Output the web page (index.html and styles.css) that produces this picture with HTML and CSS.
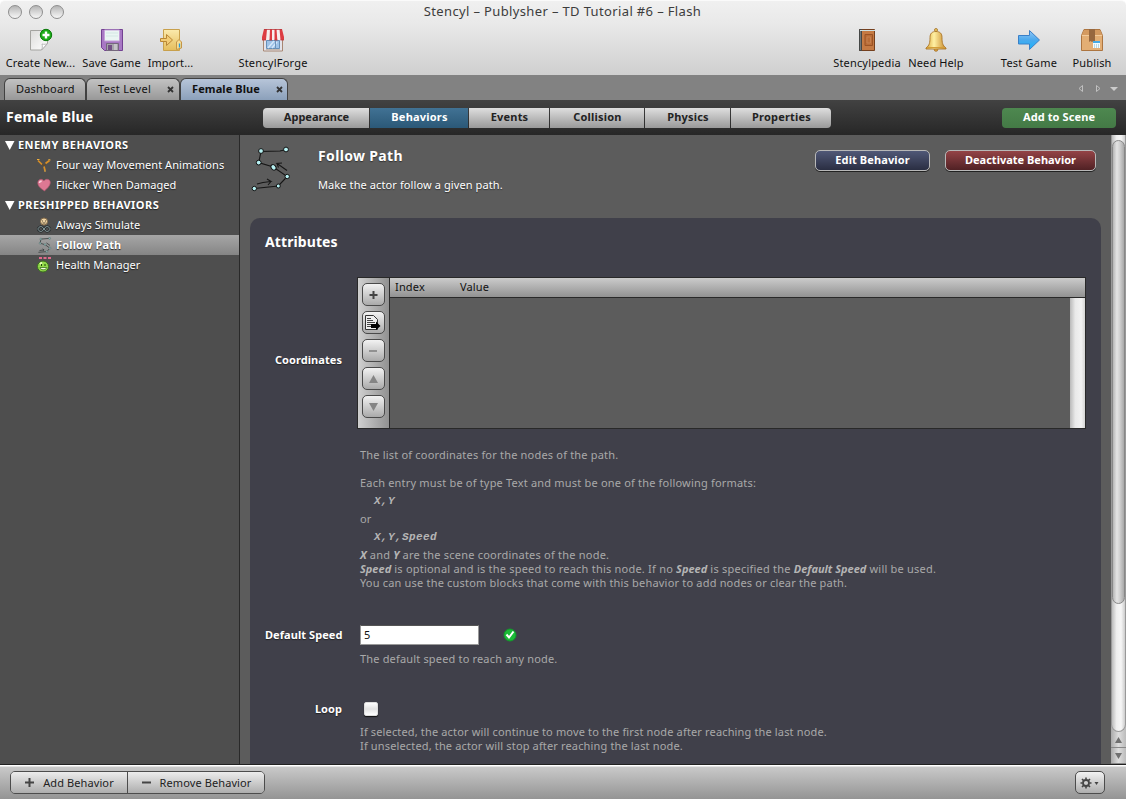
FILE: index.html
```html
<!DOCTYPE html>
<html lang="en">
<head>
<meta charset="utf-8">
<title>Stencyl - Publysher - TD Tutorial #6 - Flash</title>
<link rel="stylesheet" href="styles.css">
</head>
<body>
<div class="window">
  <header class="titlebar">
    <div class="title-row">
      <div class="lights"><i></i><i></i><i></i></div>
      <h1 class="title">Stencyl – Publysher – TD Tutorial #6 – Flash</h1>
    </div>
    <nav class="toolbar">
      <div class="tool w-create"><svg width="24" height="24" viewBox="0 0 24 24"><defs><linearGradient id="pg" x1="0" y1="0" x2="1" y2="1"><stop offset="0" stop-color="#dcdcda"/><stop offset="1" stop-color="#fff"/></linearGradient></defs><path d="M1.500 2.500h17v13l-6 6.500h-11z" fill="url(#pg)" stroke="#a4a4a0"/><path d="M12.500 22c1-2 1-4 .5-6 2 .6 4 .3 5.500-.5z" fill="#fff" stroke="#aaa" stroke-width=".8"/><circle cx="17" cy="7" r="5.700" fill="#1cab18" stroke="#087808"/><path d="M17 3.500v7M13.500 7h7" stroke="#fff" stroke-width="2.400"/></svg><span>Create New...</span></div>
      <div class="tool w-save"><svg width="24" height="24" viewBox="0 0 24 24"><path d="M1.500 1.500h21v21h-18l-3-3z" fill="#a878c4" stroke="#734192"/><path d="M4.500 2h15v11h-15z" fill="#eaf5f3" stroke="#c4a1d8"/><path d="M6 5h12M6 8h12" stroke="#d3e7e4"/><path d="M6.500 15.500h12v7h-12z" fill="#a6a3ab" stroke="#75677d"/><path d="M8 17h4v5H8z" fill="#735085"/><path d="M14 16h3v6h-3z" fill="#c5c3c8"/></svg><span>Save Game</span></div>
      <div class="tool w-import"><svg width="24" height="24" viewBox="0 0 24 24"><defs><linearGradient id="im" x1="0" y1="0" x2="0" y2="1"><stop offset="0" stop-color="#fbeaad"/><stop offset="1" stop-color="#e5bd5b"/></linearGradient></defs><path d="M4.500 1.500h16v21h-16z" fill="url(#im)" stroke="#c8a04c"/><path d="M1.500 10.500h6v-4l6 5.500-6 5.500v-4h-6z" fill="#f2cc75" stroke="#b98635"/><path d="M17.500 21.500V14l2.500-2.500 2.500 2.500v6z" fill="#f7dc91" stroke="#c59545"/><path d="M20.500 15.500v4" stroke="#269bdc" stroke-width="1.300"/></svg><span>Import...</span></div>
      <div class="tool w-forge"><svg width="24" height="24" viewBox="0 0 24 24"><path d="M2.500 10h19v13h-19z" fill="#e3e3ea" stroke="#a88672"/><path d="M5.500 12.500h13v8h-13z" fill="#9ec3e8" stroke="#668fb7"/><path d="M7 20l6-7M11 20l5-6" stroke="#d4e7fa" stroke-width="1.500"/><path d="M14.500 13v8" stroke="#6d93b8"/><path d="M5 21.500h14" stroke="#c4b9b0"/><path d="M3 1h18l2 8v3H1V9z" fill="#f6eeee"/><path d="M3 1h3L5 12H1V9zM9 1h2v11H8.500zM13.500 1h2l.8 11h-2.800zM18.500 1H21l2 8v3h-3.500z" fill="#dc3c42"/><path d="M3 1.500h18M1 12h4M8.500 12H11M13.500 12h3M19.500 12H23" stroke="#b9383c" stroke-width=".8"/></svg><span>StencylForge</span></div>
      <div class="spacer"></div>
      <div class="tool w-pedia"><svg width="24" height="24" viewBox="0 0 24 24"><path d="M4.500 1.500h15v21h-15z" fill="#c57a43" stroke="#75401e"/><path d="M4.500 1.500h2v21h-2z" fill="#70777a" stroke="#454746"/><path d="M5 2.500h15" stroke="#cfe0e1"/><path d="M10 6.500h7.500v11H10z" fill="#b96c36" stroke="#9b5325"/><path d="M12 9h3.500v6H12z" fill="none" stroke="#c58050"/></svg><span>Stencylpedia</span></div>
      <div class="tool w-help"><svg width="24" height="24" viewBox="0 0 24 24"><defs><linearGradient id="bell"><stop offset="0" stop-color="#d8a53a"/><stop offset=".4" stop-color="#fff0a3"/><stop offset="1" stop-color="#c78728"/></linearGradient></defs><circle cx="12" cy="2" r="1.500" fill="#efcc65" stroke="#9e6c24" stroke-width=".8"/><circle cx="12" cy="21.500" r="1.800" fill="#dca63e" stroke="#a16b22" stroke-width=".8"/><path d="M12 3.500c-4 0-6 2-6 6 0 5-.5 8-4 10.500v1h20v-1c-3.500-2.500-4-5.500-4-10.500 0-4-2-6-6-6z" fill="url(#bell)" stroke="#ab7629" stroke-width=".9"/><path d="M3 19.500h18" stroke="#d49e38"/></svg><span>Need Help</span></div>
      <div class="tool w-test"><svg width="24" height="24" viewBox="0 0 24 24"><defs><linearGradient id="ar" x1="0" y1="0" x2="0" y2="1"><stop offset="0" stop-color="#95c6f3"/><stop offset=".5" stop-color="#4aa9ee"/><stop offset="1" stop-color="#18b4fa"/></linearGradient></defs><path d="M1.500 7.500h11v-5L22.500 12l-10 9.500v-5.500h-11z" fill="url(#ar)" stroke="#3a80c8"/></svg><span>Test Game</span></div>
      <div class="tool w-publish"><svg width="24" height="24" viewBox="0 0 24 24"><path d="M4 1.500h16l2.500 6v15h-21v-15z" fill="#e3ae74" stroke="#ad7540"/><path d="M4 2h16l2 5H2z" fill="#d49a60"/><path d="M2 7.500h20" stroke="#f2ca9a"/><path d="M9 1h6v13l-1.500-1-1.500 1-1.500-1L9 14z" fill="#97683f"/><path d="M13 13h7v7h-7z" fill="#f2fbff"/><path d="M13 13h7v2h-7z" fill="#45a9e4"/><path d="M14 17h5M14 19h5" stroke="#7eb5c9" stroke-dasharray="1 1"/></svg><span>Publish</span></div>
    </nav>
  </header>

  <div class="tabs">
    <div class="tab t1"><span>Dashboard</span></div>
    <div class="tab t2"><span>Test Level</span><svg class="x" width="7" height="7" viewBox="0 0 7 7"><path d="M1 1l5 5M6 1L1 6"/></svg></div>
    <div class="tab t3 active"><span>Female Blue</span><svg class="x" width="7" height="7" viewBox="0 0 7 7"><path d="M1 1l5 5M6 1L1 6"/></svg></div>
    <svg class="tabnav" width="44" height="10" viewBox="0 0 44 10"><path d="M5.500 1.500v6L2 4.500zM19.500 1.500v6l3.500-3z" fill="none" stroke="#c0c0c0"/><path d="M33 3h8l-4 4z" fill="#ccc"/></svg>
  </div>

  <div class="actorbar">
    <h2 class="actor">Female Blue</h2>
    <div class="segments">
      <button class="g1">Appearance</button><button class="g2 on">Behaviors</button><button class="g3">Events</button><button class="g4">Collision</button><button class="g5">Physics</button><button class="g6">Properties</button>
    </div>
    <button class="addscene">Add to Scene</button>
  </div>

  <div class="body">
    <aside class="sidebar">
      <div class="group"><svg width="10" height="9" viewBox="0 0 10 9"><path d="M0 0h9.500L4.700 9z"/></svg><span>ENEMY BEHAVIORS</span></div>
      <div class="item"><svg width="16" height="16" viewBox="0 0 16 16"><path d="M2 3.500l4 4M13.500 3.500l-4 3M8 9.500l1 4" stroke="#d98f25" stroke-width="1.700" fill="none"/><path d="M1 2.500h2.500M12.500 2.500l2 .5M8 14h2" stroke="#efaf3f" fill="none"/><path d="M6 7.500l2 1 2-1.500" stroke="#6a4a20" fill="none"/></svg><span>Four way Movement Animations</span></div>
      <div class="item"><svg width="16" height="16" viewBox="0 0 16 16"><path d="M8.500 14C5 11.500 2 9.500 1.800 6c0-4 4.500-4.800 6-2 2-2.800 6.500-2 6.500 1.500 0 3.500-3.500 6-5.800 8.500z" fill="#dd7893" stroke="#b0566f" stroke-width=".7"/><path d="M3.500 6c0-1.500 1.200-2 2.200-1.500" stroke="#fbd3dd" stroke-width="1.600" fill="none"/></svg><span>Flicker When Damaged</span></div>
      <div class="group"><svg width="10" height="9" viewBox="0 0 10 9"><path d="M0 0h9.500L4.700 9z"/></svg><span>PRESHIPPED BEHAVIORS</span></div>
      <div class="item"><svg width="16" height="16" viewBox="0 0 16 16"><circle cx="8" cy="4.500" r="3.500" fill="#edd2a3" stroke="#836a48"/><path d="M6 4h1M9 4h1M6.500 6h3" stroke="#594a36"/><path d="M8 12c-3-5-6-1-6 0s3 5 6 0c3-5 6-1 6 0s-3 5-6 0z" fill="none" stroke="#252b2d" stroke-width="2.400"/><path d="M8 12c-3-5-6-1-6 0s3 5 6 0c3-5 6-1 6 0s-3 5-6 0z" fill="none" stroke="#93a7a9" stroke-width=".9"/></svg><span>Always Simulate</span></div>
      <div class="item selected"><svg width="16" height="16" viewBox="0 0 42 46"><g fill="none" stroke="#3d4444" stroke-width="2.500"><path d="M37 4L12 6l-2 12 14 4 14 10-9 10L5 44M8 39l13-2-4-3m4 3l-3 3M38 24l-10-7"/></g><g fill="#8ab0ae" stroke="#4c5e5e"><circle cx="37" cy="4" r="3"/><circle cx="12" cy="6" r="3"/><circle cx="10" cy="18" r="3"/><circle cx="24" cy="22" r="3"/><circle cx="38" cy="32" r="3"/><circle cx="29" cy="42" r="3"/></g></svg><span>Follow Path</span></div>
      <div class="item"><svg width="16" height="16" viewBox="0 0 16 16"><circle cx="7" cy="9.500" r="5.500" fill="#92d84a" stroke="#386d1e"/><path d="M4 7l2-1.500" stroke="#e6ffb5" stroke-width="2"/><path d="M5.500 7v2M9 7v2" stroke="#20460f"/><path d="M4 10.500h6.500c0 3-6.500 3-6.500 0z" fill="#f3ffe1" stroke="#386e1c" stroke-width=".8"/><path d="M3 1h3M7.500 1h3M12 1h3" stroke="#e06a8b" stroke-width="2"/></svg><span>Health Manager</span></div>
    </aside>

    <main class="main">
      <section class="intro">
        <svg class="pathicon" width="42" height="46" viewBox="0 0 42 46"><g fill="none" stroke="#161616" stroke-width="1.100"><path d="M36 3.500L30 5 11 5.500 8.700 16.600l14.600 4.400 13.900 9.500-8.900 9.500L4.300 42.500M7 38l6-1.500 8-1-4-2.500m4 2.500l-3 3.500M37 24.500L27 17.500l5-.5M27 17.500l1.500 4"/></g><g fill="#b7f2f4" stroke="#111"><circle cx="36" cy="3.500" r="2.400"/><circle cx="11" cy="5" r="2.400"/><circle cx="8.700" cy="16.600" r="2.400"/><ellipse cx="23.500" cy="21.300" rx="2.300" ry="3" transform="rotate(-40 23.500 21.300)"/><circle cx="37.200" cy="30.500" r="2.200"/><circle cx="28.300" cy="40" r="2"/><circle cx="4.300" cy="42.500" r="2.200"/></g></svg>
        <div class="intro-text"><h2>Follow Path</h2><p>Make the actor follow a given path.</p></div>
        <button class="pill edit">Edit Behavior</button>
        <button class="pill deact">Deactivate Behavior</button>
      </section>

      <section class="panel">
        <h3>Attributes</h3>
        <div class="field f1">
          <label>Coordinates</label>
          <div class="list">
            <div class="listbar">
              <button><svg width="21" height="21" viewBox="0 0 21 21"><path d="M10.500 7v8M6.500 11h8" stroke="#444" stroke-width="2"/></svg></button>
              <button><svg width="21" height="21" viewBox="0 0 21 21"><path d="M2.500 3.500h8l4 4v10h-12z" fill="#eee" stroke="#333"/><path d="M4 6.500h4M4 8.500h6M4 10.500h8M4 12.500h4M4 14.500h4" stroke="#444"/><path d="M8 12h5V9.500l4.500 4.500-4.500 4v-2H8z" fill="#000"/></svg></button>
              <button><svg width="21" height="21" viewBox="0 0 21 21"><path d="M6 11h8" stroke="#919191" stroke-width="2"/></svg></button>
              <button><svg width="21" height="21" viewBox="0 0 21 21"><path d="M6 15h9l-4.500-8z" fill="#858585"/></svg></button>
              <button><svg width="21" height="21" viewBox="0 0 21 21"><path d="M6 7h9l-4.500 8z" fill="#858585"/></svg></button>
            </div>
            <div class="table">
              <div class="thead"><span class="c-index">Index</span><span>Value</span></div>
              <div class="tbody"><div class="track"></div></div>
            </div>
          </div>
        </div>
        <div class="help h1">
          <p>The list of coordinates for the nodes of the path.</p>
          <p class="gap">Each entry must be of type Text and must be one of the following formats:</p>
          <p class="code">X,Y</p>
          <p>or</p>
          <p class="code">X,Y,Speed</p>
          <p class="mixed"><b>X</b> and <b>Y</b> are the scene coordinates of the node.</p>
          <p class="mixed"><b>Speed</b> is optional and is the speed to reach this node. If no <b>Speed</b> is specified the <b>Default Speed</b> will be used.</p>
          <p>You can use the custom blocks that come with this behavior to add nodes or clear the path.</p>
        </div>
        <div class="field f2">
          <label>Default Speed</label>
          <div class="input">5</div>
          <svg class="ok" width="14" height="14" viewBox="0 0 14 14"><circle cx="7" cy="7" r="6" fill="#1bbb37" stroke="#129a2b"/><path d="M3.500 6.500L6 9.500 10.500 3.500" fill="none" stroke="#fff" stroke-width="2"/></svg>
        </div>
        <div class="help h2"><p>The default speed to reach any node.</p></div>
        <div class="field f3"><label>Loop</label><div class="check"></div></div>
        <div class="help h3"><p>If selected, the actor will continue to move to the first node after reaching the last node.</p><p>If unselected, the actor will stop after reaching the last node.</p></div>
      </section>
    </main>

    <div class="scroll">
      <div class="rail"><div class="thumb"></div></div>
      <div class="arrow"><svg width="7" height="6" viewBox="0 0 7 6"><path d="M0 6h7L3.500 0z"/></svg></div>
      <div class="arrow"><svg width="7" height="6" viewBox="0 0 7 6"><path d="M0 0h7L3.500 6z"/></svg></div>
    </div>
  </div>

  <footer class="footer">
    <div class="duo">
      <button class="b-add"><svg width="9" height="9" viewBox="0 0 9 9"><path d="M4.500 0v9M0 4.500h9"/></svg><span>Add Behavior</span></button>
      <button class="b-rem"><svg width="9" height="9" viewBox="0 0 9 9"><path d="M0 4.500h9"/></svg><span>Remove Behavior</span></button>
    </div>
    <button class="gear"><svg width="20" height="12" viewBox="0 0 20 12"><circle cx="6" cy="6" r="3" fill="none" stroke="#444" stroke-width="1.800"/><path d="M6 .5v2M6 9.500v2M.5 6h2M9.500 6h2M2 2l1.500 1.500M8.500 8.500L10 10M10 2L8.500 3.500M3.500 8.500L2 10" stroke="#444" stroke-width="1.600"/><path d="M14.500 5h4l-2 3z" fill="#444"/></svg></button>
  </footer>
</div>
</body>
</html>
```
FILE: styles.css
```css
* { box-sizing: border-box; }
body { margin: 0; background: #fff; font: 11px/14px "Noto Sans", "Open Sans", sans-serif; color: #111; letter-spacing: 0.1px; }
h1, h2, h3, p { margin: 0; }
svg { display: block; flex: none; }
button { font: inherit; letter-spacing: inherit; border: 0; padding: 0; color: inherit; display: flex; align-items: center; justify-content: center; white-space: nowrap; }
span, p, label { white-space: nowrap; }
.window { width: 1126px; height: 799px; display: flex; flex-direction: column; overflow: hidden; }

.titlebar { height: 75px; flex: none; background: linear-gradient(#f0f0f0, #e9e9e9 30%, #cfcfcf); border-radius: 5px 5px 0 0; border-top: 1px solid #fafafa; }
.title-row { height: 22px; display: grid; grid-template-columns: 70px 1fr 71px; align-items: center; }
.lights { display: flex; gap: 7px; padding-left: 8px; margin-top: -1px; }
.lights i { width: 14px; height: 14px; border-radius: 50%; border: 1px solid #8e8e8e; background: linear-gradient(#b4b4b4, #dedede 60%, #f6f6f6); }
.title { font-size: 13px; font-weight: 400; line-height: 18px; text-align: center; color: #3c3c3c; letter-spacing: 0.360px; margin-top: -2px; }
.toolbar { display: flex; padding: 5px 10px 0 0; }
.tool { display: flex; flex-direction: column; align-items: center; gap: 4px; }
.w-create { width: 80px; padding-left: 1px; }
.w-save { width: 62px; padding-left: 1px; }
.w-import { width: 56px; padding-left: 1px; }
.w-forge { width: 150px; letter-spacing: 0.220px; }
.spacer { flex: 1; }
.w-pedia { width: 78px; letter-spacing: 0.180px; }
.w-help { width: 60px; margin-right: 24px; }
.w-test { width: 78px; letter-spacing: 0.220px; }
.w-publish { width: 48px; letter-spacing: 0.180px; }

.tabs { height: 25px; flex: none; background: #828282; display: flex; align-items: flex-end; padding-left: 4px; }
.tab { height: 22px; border: 1px solid #414141; border-bottom: 0; border-radius: 6px 6px 0 0; background: linear-gradient(#c2c2c2, #989898); display: flex; align-items: center; justify-content: space-between; padding: 0 5px 2px 11px; }
.x { margin-top: 2px; stroke: #333; stroke-width: 1.800; }
.t1 { width: 82px; letter-spacing: 0.200px; } .t2 { width: 94px; letter-spacing: 0.300px; } .t3 { width: 108px; }
.tab.active { background: linear-gradient(#b7c5d9, #8ba0ba); font-weight: 700; padding-right: 4px; }
.tabnav { margin: 0 5px 6px auto; }

.actorbar { height: 35px; flex: none; background: linear-gradient(#424242, #272727); display: flex; align-items: center; padding: 0 10px 0 6px; }
.actor { width: 257px; font-size: 14px; line-height: 18px; color: #fff; letter-spacing: 0.200px; margin-top: -2px; }
.segments { display: flex; gap: 1px; height: 20px; border-radius: 4px; overflow: hidden; font-weight: 700; color: #222; letter-spacing: 0.200px; }
.segments button { background: linear-gradient(#dedede, #999); padding: 0 0 1px 1px; }
.segments .on { background: linear-gradient(#417294, #2b5877); color: #fff; }
.g1 { width: 106px; } .g2 { width: 98px; } .g3 { width: 80px; } .g4 { width: 94px; } .g5 { width: 85px; } .g6 { width: 100px; }
.segments .g1 { letter-spacing: 0; }
.addscene { width: 114px; height: 20px; margin-left: auto; border-radius: 4px; background: linear-gradient(#4e8850, #447a46); color: #fff; font-weight: 700; padding-bottom: 1px; }

.body { height: 629px; flex: none; display: flex; background: #5c5c5c; }
.sidebar { width: 240px; background: #4e4e4e; border-right: 1px solid #292929; color: #fff; }
.group, .item { height: 20px; display: flex; align-items: center; text-shadow: 0 1px 1px #222; }
.group { padding-left: 5px; gap: 3px; font-weight: 700; fill: #fff; letter-spacing: 0.450px; }
.item { padding-left: 36px; gap: 4px; letter-spacing: 0.050px; }
.item.selected { background: linear-gradient(#a6a6a6, #858585); font-weight: 700; letter-spacing: 0.150px; }

.main { width: 871px; padding: 0 10px; overflow: hidden; }
.intro { height: 83px; display: flex; align-items: flex-start; padding: 15px 5px 0 0; color: #fff; }
.pathicon { margin-top: -4px; }
.intro-text { margin: -3px auto 0 26px; text-shadow: 0 1px 1px #333; }
.intro-text h2 { font-size: 14px; line-height: 18px; letter-spacing: 0.350px; }
.intro-text p { margin-top: 13px; }
.pill { height: 21px; border: 1px solid #b8b8b8; border-radius: 5px; color: #fff; font-weight: 700; box-shadow: 0 1px 0 #222; padding-bottom: 1px; }
.edit { width: 115px; margin-right: 15px; background: linear-gradient(#505877, #2a2e42); }
.deact { width: 151px; background: linear-gradient(#944346, #502124); letter-spacing: 0; }

.panel { height: 560px; background: #40404a; border-radius: 10px 10px 0 0; padding: 15px 15px 0; color: #fff; }
.panel h3 { font-size: 14px; line-height: 18px; }
.field { display: flex; align-items: center; }
.field label { width: 77px; text-align: right; font-weight: 700; flex: none; text-shadow: 0 1px 1px #222; letter-spacing: 0.060px; }
.f1 { margin-top: 26px; height: 152px; }
.f1 label { margin-top: 14px; }
.list { margin-left: 15px; width: 729px; height: 152px; border: 1px solid #292929; display: flex; }
.listbar { width: 32px; border-right: 1px solid #292929; background: linear-gradient(90deg, #d0d0d0, #919191); padding: 5px 0 0 4px; display: flex; flex-direction: column; gap: 5px; }
.listbar button { width: 23px; height: 23px; border: 1px solid #4a4a4a; border-radius: 5px; background: linear-gradient(#f2f2f2, #aaa); }
.table { flex: 1; display: flex; flex-direction: column; }
.thead { height: 20px; border-bottom: 1px solid #292929; background: linear-gradient(#cbcbcb, #929292); color: #111; display: flex; align-items: center; padding: 0 0 2px 5px; letter-spacing: 0.150px; }
.c-index { width: 65px; }
.tbody { flex: 1; background: #5c5c5c; display: flex; justify-content: flex-end; }
.track { width: 15px; background: linear-gradient(90deg, #b9b9b9, #e9e9e9 35%, #f2f2f2 75%, #d5d5d5); }
.help { padding-left: 95px; color: #a9a9a9; letter-spacing: 0.190px; }
.h1 { margin-top: 19px; }
.help .gap { margin-top: 14px; }
.help b { font-style: italic; color: #b5b5b5; letter-spacing: 0; }
.help .mixed { letter-spacing: 0.220px; }
.help .code { font: italic 700 11px/14px "Liberation Mono", monospace; padding-left: 14px; margin: 4px 0; letter-spacing: 0.400px; color: #b5b5b5; }
.f2 { margin-top: 35px; height: 20px; }
.input { margin-left: 18px; width: 119px; height: 20px; background: #fff; border: 1px solid #999; border-top-color: #555; color: #111; padding: 2px 3px; line-height: 14px; }
.ok { margin-left: 24px; }
.h2 { margin-top: 7px; letter-spacing: 0.170px; }
.f3 { margin-top: 36px; height: 14px; }
.check { margin-left: 22px; width: 14px; height: 14px; border: 1px solid #ddd; border-radius: 2px; background: linear-gradient(#fff, #e2e2e2 50%, #fff); box-shadow: 0 1px 1px #111; }
.h3 { margin-top: 9px; letter-spacing: 0.150px; }

.scroll { width: 15px; display: flex; flex-direction: column; background: linear-gradient(90deg, #aaa, #ddd 50%, #bbb); }
.rail { height: 597px; padding-top: 5px; border-radius: 0 0 8px 8px; border: solid #999; border-width: 0 1px 1px; background: linear-gradient(90deg, #bcbcbc, #efefef 35%, #f6f6f6 70%, #ccc); }
.thumb { height: 464px; border: 1px solid #888; border-radius: 7px; background: linear-gradient(90deg, #b5b5b5, #e4e4e4 35%, #d2d2d2 60%, #a9a9a9); }
.arrow { height: 16px; display: flex; align-items: center; justify-content: center; fill: #707070; border-bottom: 1px solid #888; }

.footer { height: 35px; flex: none; border-top: 1px solid #222; background: linear-gradient(#fff 0, #fff 1px, #c9c9c9 2px, #949494); display: flex; align-items: flex-start; justify-content: space-between; padding: 6px 21px 0 10px; }
.duo { display: flex; height: 23px; border: 1px solid #4c4c4c; border-radius: 5px; overflow: hidden; }
.duo button { gap: 9px; background: linear-gradient(#ececec, #adadad); color: #222; padding-left: 1px; }
.duo svg { stroke: #444; stroke-width: 2; }
.b-add { width: 117px; border-right: 1px solid #4c4c4c; }
.b-rem { width: 136px; }
.gear { width: 30px; height: 23px; border: 1px solid #4c4c4c; border-radius: 5px; background: linear-gradient(#f2f2f2, #adadad); }
```
